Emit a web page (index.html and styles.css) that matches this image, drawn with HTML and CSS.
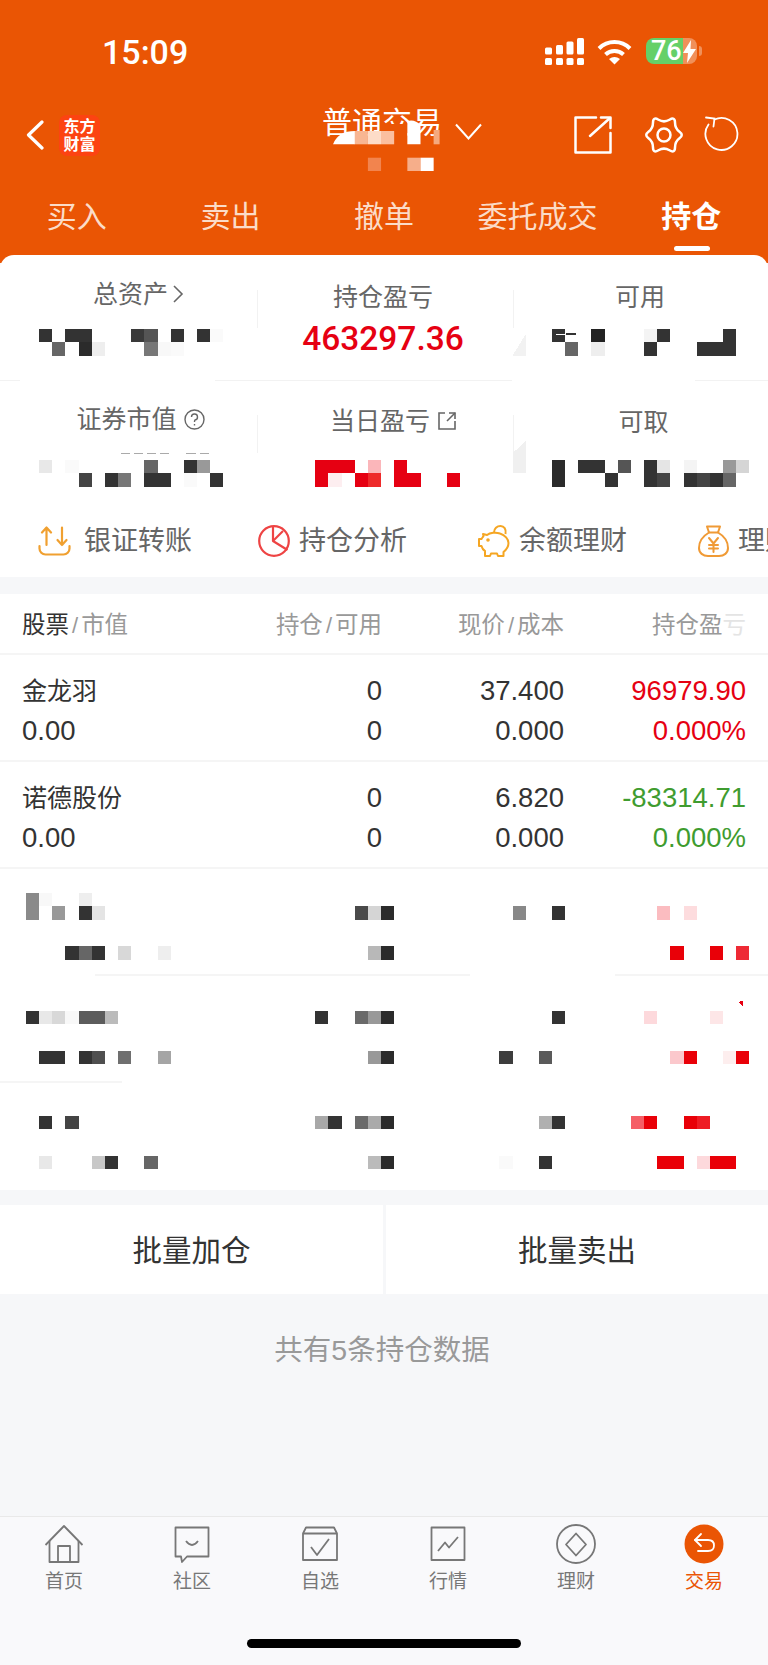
FILE: index.html
```html
<!DOCTYPE html>
<html>

<head>
  <meta charset="UTF-8">
  <title>持仓</title>
  <link rel="stylesheet" href="styles.css">
</head>

<body>
  <header class="top">
    <div class="status">
      <span class="status-time">15:09</span>
      <svg class="status-signal" width="40" height="27" viewBox="0 0 40 27" fill="#fff">
        <rect x="0" y="9.500" width="7" height="7" rx="1.500" />
        <rect x="11" y="7" width="7" height="9.500" rx="1.500" />
        <rect x="21.500" y="3.500" width="7" height="13" rx="1.500" />
        <rect x="32" y="0" width="7" height="16.500" rx="1.500" />
        <rect x="0" y="20" width="7" height="7" rx="1.500" />
        <rect x="11" y="20" width="7" height="7" rx="1.500" />
        <rect x="21.500" y="20" width="7" height="7" rx="1.500" />
        <rect x="32" y="20" width="7" height="7" rx="1.500" />
      </svg>
      <svg class="status-wifi" width="35" height="26" viewBox="0 0 35 26" fill="none" stroke="#fff" stroke-width="4">
        <path d="M2 9.500 A22 22 0 0 1 33 9.500" />
        <path d="M8.500 15.500 A13 13 0 0 1 26.500 15.500" />
        <path d="M17.500 25.500 L12 20 Q17.500 16 23 20 Z" fill="#fff" stroke="none" />
      </svg>
      <div class="battery">
        <span class="battery-num">76</span>
        <svg width="13" height="23" viewBox="0 0 13 23" fill="#fff">
          <path d="M8 0 L0 13 H5 L4 23 L13 9 H7.500 Z" />
        </svg>
      </div>
      <i class="battery-nub"></i>
    </div>

    <div class="nav">
      <svg class="nav-back" width="18" height="30" viewBox="0 0 18 30" fill="none" stroke="#fff" stroke-width="3.200" stroke-linecap="round" stroke-linejoin="round">
        <path d="M16 2 L2.500 15 L16 28" />
      </svg>
      <div class="logo">东方<br>财富</div>
      <div class="nav-title">普通交易</div>
      <svg class="nav-arrow" width="27" height="17" viewBox="0 0 27 17" fill="none" stroke="#fff" stroke-width="2">
        <path d="M1 1.500 L13.500 15.500 L26 1.500" />
      </svg>
      <div class="nav-tools">
        <svg width="38" height="38" viewBox="0 0 38 38" fill="none" stroke="#fff" stroke-width="2.500" stroke-linecap="round" stroke-linejoin="round">
          <path d="M22 1.500 H1.500 V36.500 H36.500 V17" />
          <path d="M16 20 L36 2" />
          <path d="M27 1.500 H36.500 V12" />
        </svg>
        <svg class="nav-gear" width="40" height="38" viewBox="0 0 40 38" fill="none" stroke="#fff" stroke-width="2.500">
          <path d="M35.500 22.250 Q40 19 35.500 15.750 Q31 12.500 31 6.500 Q31 .5 25.500 3.750 Q20 7 14.500 3.750 Q9 .5 9 6.500 Q9 12.500 4.500 15.750 Q0 19 4.500 22.250 Q9 25.500 9 31.500 Q9 37.500 14.500 34.250 Q20 31 25.500 34.250 Q31 37.500 31 31.500 Q31 25.500 35.500 22.250 Z" />
          <circle cx="20" cy="19" r="6.500" />
        </svg>
        <svg class="nav-reload" width="36" height="36" viewBox="0 0 36 36" fill="none" stroke="#fff" stroke-width="1.800" stroke-linecap="round">
          <path d="M11.500 3.500 A16 16 0 1 1 5.500 8.500" />
          <path d="M3 1.500 L11.500 2.500 L10.500 10.500" />
        </svg>
      </div>
      <!-- redaction over the account name -->
      <svg class="nav-mask" width="200" height="90" viewBox="0 0 200 90">
        <rect x="84" y="14" width="23.400" height="21" fill="#ea5504" />
        <path d="M33 34.300 Q38 21 55 21 V34.300 Z" fill="#fff" />
        <rect x="54.750" y="21" width="13.150" height="13.300" fill="#f8b692" />
        <rect x="67.900" y="21" width="13.150" height="13.300" fill="#fddcc8" />
        <rect x="81" y="21" width="13.150" height="13.300" fill="#fbbf9f" />
        <path d="M107.350 34.300 V11 Q115 9 120.500 15 V34.300 Z" fill="#fff" />
        <rect x="133.600" y="20" width="6" height="14.300" fill="#f5a97e" />
        <rect x="67.900" y="47.700" width="13.150" height="13.300" fill="#f2844e" />
        <rect x="107.350" y="47.700" width="13.150" height="13.300" fill="#f6ae8a" />
        <rect x="120.500" y="47.700" width="13.150" height="13.300" fill="#fff" />
      </svg>
    </div>

    <div class="tabs">
      <div class="tab">买入</div>
      <div class="tab">卖出</div>
      <div class="tab">撤单</div>
      <div class="tab">委托成交</div>
      <div class="tab tab-active">持仓</div>
    </div>
  </header>

  <section class="summary">
    <div class="stats">
      <div class="stat">
        <div class="stat-label stat-label-left">总资产
          <svg width="12" height="20" viewBox="0 0 12 20" fill="none" stroke="#666" stroke-width="1.600">
            <path d="M2 2 L10 10 L2 18" />
          </svg>
        </div>
      </div>
      <div class="stat stat-line">
        <div class="stat-label">持仓盈亏</div>
        <div class="stat-value">463297.36</div>
      </div>
      <div class="stat stat-line">
        <div class="stat-label">可用</div>
      </div>
      <svg class="mosaic mosaic-stats" viewBox="0 0 55 2" preserveAspectRatio="none" shape-rendering="crispEdges">
        <rect x="1" y="0" fill="#333" /><rect x="3" y="0" fill="#333" /><rect x="4" y="0" fill="#333" />
        <rect x="8" y="0" fill="#3a3a3a" /><rect x="9" y="0" fill="#555" /><rect x="11" y="0" fill="#333" />
        <rect x="13" y="0" fill="#333" /><rect x="14" y="0" fill="#fafafa" />
        <rect x="2" y="1" fill="#666" /><rect x="4" y="1" fill="#2b2b2b" /><rect x="5" y="1" fill="#eee" />
        <rect x="9" y="1" fill="#777" /><rect x="10" y="1" fill="#f8f8f8" /><rect x="11" y="1" fill="#fafafa" />
        <polygon points="37,2 38,2 38,.4" fill="#f2f2f2" />
        <rect x="40" y="0" fill="#333" /><rect class="cap" x="40.300" y=".35" fill="#fff" /><rect class="cap" x="41.100" y=".3" fill="#333" />
        <rect x="43" y="0" fill="#222" /><rect x="47" y="0" fill="#f4f4f4" /><rect x="48" y="0" fill="#333" /><rect x="53" y="0" fill="#333" />
        <rect x="41" y="1" fill="#666" /><rect x="43" y="1" fill="#eee" /><rect x="47" y="1" fill="#333" />
        <rect x="51" y="1" fill="#333" /><rect x="52" y="1" fill="#333" /><rect x="53" y="1" fill="#333" />
      </svg>
    </div>

    <div class="stats stats-second">
      <div class="stat">
        <div class="stat-label stat-label-left stat-label-wide">证券市值
          <svg class="stat-help" width="21" height="21" viewBox="0 0 21 21" fill="none" stroke="#666" stroke-width="1.400">
            <circle cx="10.500" cy="10.500" r="9.500" />
            <path d="M7.500 8 A3 3 0 1 1 11 11 Q10.500 11.500 10.500 13" />
            <path d="M10.500 15 V16.500" />
          </svg>
        </div>
      </div>
      <div class="stat stat-line">
        <div class="stat-label stat-label-mid">当日盈亏
          <svg class="stat-help" width="20" height="20" viewBox="0 0 20 20" fill="none" stroke="#666" stroke-width="1.600">
            <path d="M8 2 H2 V18 H18 V10" />
            <path d="M10 10 L18 2" />
            <path d="M12 2 H18 V8" />
          </svg>
        </div>
      </div>
      <div class="stat stat-line">
        <div class="stat-label stat-label-right">可取</div>
      </div>
      <svg class="mosaic mosaic-stats-low" viewBox="0 0 55 2" preserveAspectRatio="none" shape-rendering="crispEdges">
        <rect class="cap" x="7.200" y="-.55" fill="#aaa" /><rect class="cap" x="8.200" y="-.55" fill="#aaa" />
        <rect class="cap" x="9.200" y="-.55" fill="#aaa" /><rect class="cap" x="10.200" y="-.55" fill="#aaa" />
        <rect class="cap" x="12.200" y="-.55" fill="#aaa" /><rect class="cap" x="13.200" y="-.55" fill="#aaa" />
        <rect x="1" y="0" fill="#e8e8e8" /><rect x="3" y="0" fill="#fafafa" /><rect x="9" y="0" fill="#666" />
        <rect x="12" y="0" fill="#333" /><rect x="13" y="0" fill="#999" />
        <rect x="4" y="1" fill="#444" /><rect x="6" y="1" fill="#333" /><rect x="7" y="1" fill="#777" />
        <rect x="9" y="1" fill="#333" /><rect x="10" y="1" fill="#333" /><rect x="12" y="1" fill="#fafafa" /><rect x="14" y="1" fill="#333" />
        <rect x="22" y="0" fill="#e60012" /><rect x="23" y="0" fill="#e60012" /><rect x="24" y="0" fill="#e60012" />
        <rect x="26" y="0" fill="#fbb6ba" /><rect x="28" y="0" fill="#e60012" />
        <rect x="22" y="1" fill="#e60012" /><rect x="23" y="1" fill="#fdeef0" /><rect x="25" y="1" fill="#e60012" />
        <rect x="26" y="1" fill="#ee2a2a" /><rect x="28" y="1" fill="#e60012" /><rect x="29" y="1" fill="#e60012" /><rect x="32" y="1" fill="#e60012" />
        <polygon points="37,1 38,1 38,-1.450 37,-.5" fill="#f0f0f0" />
        <rect x="40" y="0" fill="#2b2b2b" /><rect x="42" y="0" fill="#333" /><rect x="43" y="0" fill="#333" /><rect x="45" y="0" fill="#555" />
        <rect x="47" y="0" fill="#333" /><rect x="48" y="0" fill="#e5e5e5" /><rect x="50" y="0" fill="#f4f4f4" />
        <rect x="53" y="0" fill="#999" /><rect x="54" y="0" fill="#d5d5d5" />
        <rect x="40" y="1" fill="#2b2b2b" /><rect x="44" y="1" fill="#333" /><rect x="47" y="1" fill="#333" /><rect x="48" y="1" fill="#444" />
        <rect x="50" y="1" fill="#333" /><rect x="51" y="1" fill="#444" /><rect x="52" y="1" fill="#333" /><rect x="53" y="1" fill="#666" />
      </svg>
    </div>

    <div class="shortcuts">
      <div class="shortcut shortcut-first">
        <svg width="33" height="30" viewBox="0 0 33 30" fill="none" stroke="#f0a030" stroke-width="2.200" stroke-linecap="round" stroke-linejoin="round">
          <path d="M8.500 19 V1.500 M4 6.500 L8.500 1.500 L13 6.500" />
          <path d="M24 1.500 V19 M19.500 14 L24 19 L28.500 14" />
          <path d="M1.500 20 V22.500 A6 6 0 0 0 7.500 28.500 H25.500 A6 6 0 0 0 31.500 22.500 V20" />
        </svg>
        <span>银证转账</span>
      </div>
      <div class="shortcut">
        <svg width="32" height="32" viewBox="0 0 32 32" fill="none" stroke="#ee4444" stroke-width="2.200" stroke-linejoin="round">
          <circle cx="16" cy="16" r="14.800" />
          <path d="M15 1.500 V16 L29.500 25" />
          <path d="M15 16 L25 6" />
        </svg>
        <span>持仓分析</span>
      </div>
      <div class="shortcut">
        <svg width="32" height="32" viewBox="0 0 32 32" fill="none" stroke="#f5a623" stroke-width="2" stroke-linejoin="round">
          <path d="M5 9 L9 10 C12 7.500 18 7 22 8.500 C27 10 30.500 14 30.500 18 C30.500 22 28 25 25.500 27 V31 H20 L19 28.500 H13 L12 31 H7 V26 C5 25 4 23 3.500 21 H1 V14 H3.500 C4 13 5 12 5.500 11 Z" />
          <path d="M16 7.500 C16 3.500 19 1 22.500 1 C26 1 28.500 4 27.500 9" />
          <circle cx="10" cy="15" r=".8" fill="#f5a623" />
        </svg>
        <span>余额理财</span>
      </div>
      <div class="shortcut">
        <svg width="31" height="32" viewBox="0 0 31 32" fill="none" stroke="#f09a35" stroke-width="2" stroke-linejoin="round" stroke-linecap="round">
          <path d="M9 1.500 H22 L20 7.500 H11 Z" />
          <path d="M11 7.500 C5 11 1 17 1 23 C1 28 5 31 10 31 H21 C26 31 30 28 30 23 C30 17 26 11 20 7.500" />
          <path d="M11 13 L15.500 18.500 L20 13 M15.500 18.500 V27 M11 20 H20 M11 23.500 H20" />
        </svg>
        <span>理财产品</span>
      </div>
    </div>
  </section>

  <section class="holdings">
    <div class="row row-head">
      <div class="cell-name"><b>股票</b><span class="sep">/</span>市值</div>
      <div>持仓<span class="sep">/</span>可用</div>
      <div>现价<span class="sep">/</span>成本</div>
      <div>持仓盈<span class="fade">亏</span></div>
    </div>

    <div class="row">
      <div class="cell-name"><p class="name">金龙羽</p><p>0.00</p></div>
      <div><p>0</p><p>0</p></div>
      <div><p>37.400</p><p>0.000</p></div>
      <div class="up"><p>96979.90</p><p>0.000%</p></div>
    </div>
    <div class="row">
      <div class="cell-name"><p class="name">诺德股份</p><p>0.00</p></div>
      <div><p>0</p><p>0</p></div>
      <div><p>6.820</p><p>0.000</p></div>
      <div class="down"><p>-83314.71</p><p>0.000%</p></div>
    </div>

    <div class="blur-row blur-a">
      <svg class="mosaic mosaic-five" viewBox="0 0 55 5" preserveAspectRatio="none" shape-rendering="crispEdges">
        <rect x="0" y="0" fill="#8a8a8a" /><rect x="1" y="0" fill="#f8f8f8" /><rect x="4" y="0" fill="#eee" />
        <rect x="0" y="1" fill="#8a8a8a" /><rect x="2" y="1" fill="#999" /><rect x="4" y="1" fill="#333" /><rect x="5" y="1" fill="#e4e4e4" />
        <rect x="25" y="1" fill="#4a4a4a" /><rect x="26" y="1" fill="#d5d5d5" /><rect x="27" y="1" fill="#2b2b2b" />
        <rect x="37" y="1" fill="#888" /><rect x="40" y="1" fill="#333" /><rect x="48" y="1" fill="#fbbcc0" /><rect x="50" y="1" fill="#fddcde" />
        <rect x="3" y="4" fill="#333" /><rect x="4" y="4" fill="#666" /><rect x="5" y="4" fill="#333" /><rect x="7" y="4" fill="#d8d8d8" /><rect x="10" y="4" fill="#eee" />
        <rect x="26" y="4" fill="#b8b8b8" /><rect x="27" y="4" fill="#2b2b2b" />
        <rect x="49" y="4" fill="#e90008" /><rect x="52" y="4" fill="#e90008" /><rect x="54" y="4" fill="#ee2a35" />
      </svg>
    </div>
    <div class="blur-row blur-b">
      <svg class="mosaic mosaic-four" viewBox="0 0 55 4" preserveAspectRatio="none" shape-rendering="crispEdges">
        <polygon points="54.150,-.7 54.550,-.75 54.550,-.3" fill="#e60012" />
        <rect x="0" y="0" fill="#333" /><rect x="1" y="0" fill="#e8e8e8" /><rect x="2" y="0" fill="#d8d8d8" /><rect x="3" y="0" fill="#f8f8f8" />
        <rect x="4" y="0" fill="#5c5c5c" /><rect x="5" y="0" fill="#5c5c5c" /><rect x="6" y="0" fill="#bbb" />
        <rect x="22" y="0" fill="#333" /><rect x="25" y="0" fill="#6a6a6a" /><rect x="26" y="0" fill="#999" /><rect x="27" y="0" fill="#2b2b2b" />
        <rect x="40" y="0" fill="#333" /><rect x="47" y="0" fill="#fdd9dc" /><rect x="52" y="0" fill="#fde6e7" />
        <rect x="1" y="3" fill="#333" /><rect x="2" y="3" fill="#333" /><rect x="4" y="3" fill="#333" /><rect x="5" y="3" fill="#4f4f4f" />
        <rect x="7" y="3" fill="#6f6f6f" /><rect x="10" y="3" fill="#a5a5a5" /><rect x="26" y="3" fill="#999" /><rect x="27" y="3" fill="#2b2b2b" />
        <rect x="36" y="3" fill="#3d3d3d" /><rect x="39" y="3" fill="#5a5a5a" />
        <rect x="49" y="3" fill="#fbc8cc" /><rect x="50" y="3" fill="#e90008" /><rect x="53" y="3" fill="#fdeeee" /><rect x="54" y="3" fill="#e90008" />
      </svg>
    </div>
    <div class="blur-row blur-c">
      <svg class="mosaic mosaic-four" viewBox="0 0 55 4" preserveAspectRatio="none" shape-rendering="crispEdges">
        <rect x="1" y="0" fill="#333" /><rect x="3" y="0" fill="#444" /><rect x="22" y="0" fill="#a8a8a8" /><rect x="23" y="0" fill="#333" />
        <rect x="25" y="0" fill="#6a6a6a" /><rect x="26" y="0" fill="#aaa" /><rect x="27" y="0" fill="#2b2b2b" />
        <rect x="39" y="0" fill="#b0b0b0" /><rect x="40" y="0" fill="#333" />
        <rect x="46" y="0" fill="#f55e66" /><rect x="47" y="0" fill="#e90008" /><rect x="50" y="0" fill="#e90008" /><rect x="51" y="0" fill="#ee1c24" />
        <rect x="1" y="3" fill="#e8e8e8" /><rect x="5" y="3" fill="#c8c8c8" /><rect x="6" y="3" fill="#333" /><rect x="9" y="3" fill="#666" />
        <rect x="26" y="3" fill="#bbb" /><rect x="27" y="3" fill="#2b2b2b" /><rect x="36" y="3" fill="#fafafa" /><rect x="39" y="3" fill="#333" />
        <rect x="48" y="3" fill="#e90008" /><rect x="49" y="3" fill="#e90008" /><rect x="51" y="3" fill="#fdd9dc" /><rect x="52" y="3" fill="#e90008" /><rect x="53" y="3" fill="#e90008" />
      </svg>
    </div>
  </section>

  <div class="actions">
    <div class="action">批量加仓</div>
    <div class="action">批量卖出</div>
  </div>

  <div class="count">共有5条持仓数据</div>

  <footer class="tabbar">
    <div class="tabbar-items">
      <div class="tabbar-item">
        <svg width="40" height="40" viewBox="0 0 40 40" fill="none" stroke="#777" stroke-width="1.800" stroke-linejoin="round">
          <path d="M1.500 21 L20 2 L38.500 21" />
          <path d="M5.500 17 V38 H34.500 V17" />
          <path d="M14 38 V22 H26 V38" />
        </svg>
        <span>首页</span>
      </div>
      <div class="tabbar-item">
        <svg width="40" height="40" viewBox="0 0 40 40" fill="none" stroke="#777" stroke-width="1.800" stroke-linejoin="round">
          <path d="M3.500 3.500 H36.500 V32.500 H15 L10 38 L9 32.500 H3.500 Z" />
          <path d="M14 17 Q20 25 26 17" />
        </svg>
        <span>社区</span>
      </div>
      <div class="tabbar-item">
        <svg width="40" height="40" viewBox="0 0 40 40" fill="none" stroke="#777" stroke-width="1.800" stroke-linejoin="round">
          <path d="M6 3.500 H34 L37 9.500 V36 H3 V9.500 Z" />
          <path d="M3 9.500 H37" />
          <path d="M11 23 L17 31 L29 15" />
        </svg>
        <span>自选</span>
      </div>
      <div class="tabbar-item">
        <svg width="40" height="40" viewBox="0 0 40 40" fill="none" stroke="#777" stroke-width="1.800" stroke-linejoin="round">
          <rect x="3.500" y="3.500" width="33" height="32.500" />
          <path d="M10 27 L17 18.500 L21 23.500 L30 13" />
        </svg>
        <span>行情</span>
      </div>
      <div class="tabbar-item">
        <svg width="40" height="40" viewBox="0 0 40 40" fill="none" stroke="#777" stroke-width="1.800" stroke-linejoin="round">
          <circle cx="20" cy="20" r="19" />
          <path d="M20 9.500 L30 20.500 L20 31.500 L10 20.500 Z" />
        </svg>
        <span>理财</span>
      </div>
      <div class="tabbar-item tabbar-active">
        <svg width="40" height="40" viewBox="0 0 40 40" fill="none" stroke="#fff" stroke-width="1.800" stroke-linecap="round" stroke-linejoin="round">
          <circle cx="20" cy="20" r="19.500" fill="#ea5504" stroke="none" />
          <path d="M17 10 L11 16 L17 22" />
          <path d="M11 16 H24 Q30 16 30 21.500 Q30 27 24 27 H14" />
        </svg>
        <span>交易</span>
      </div>
    </div>
    <i class="home-bar"></i>
  </footer>
</body>

</html>
```

FILE: styles.css
```css
* {
  box-sizing: border-box;
}

body {
  margin: 0;
  width: 768px;
  height: 1665px;
  overflow: hidden;
  background-color: #f6f7f9;
  color: #333;
  font-family: "Liberation Sans", "Noto Sans CJK SC", sans-serif;
}

p {
  margin: 0;
}

svg {
  display: block;
  flex-shrink: 0;
}

/* orange header */
.top {
  height: 263px;
  background-color: #ea5504;
  color: #fff;
}

.status {
  height: 90px;
  padding: 38px 0 0 102px;
  display: flex;
  align-items: flex-start;
}

.status-time {
  font-family: Roboto, sans-serif;
  font-weight: 500;
  font-size: 34px;
  line-height: 28px;
  width: 443px;
}

.status-wifi {
  margin: 1px 0 0 12px;
}

.status-signal {
  margin-top: 0;
}

.battery {
  width: 51px;
  height: 26px;
  margin-left: 14px;
  padding-left: 5px;
  display: flex;
  align-items: center;
  gap: 0;
  border-radius: 8px;
  background: linear-gradient(90deg, #65d068 0, #65d068 37px, #f0905a 37px);
}

.battery-num {
  width: 32px;
  font-family: Roboto, sans-serif;
  font-weight: 500;
  font-size: 27px;
  line-height: 26px;
}

.battery-nub {
  width: 3px;
  height: 10px;
  margin: 8px 0 0 2px;
  border-radius: 0 3px 3px 0;
  background-color: #f0905a;
}

.nav {
  position: relative;
  height: 90px;
  padding: 0 29px 0 26px;
  display: flex;
  align-items: center;
}

.logo {
  flex-shrink: 0;
  width: 41px;
  height: 41px;
  margin-left: 15px;
  padding-top: 3px;
  border-radius: 8px;
  background-color: #fc4312;
  font-size: 16px;
  line-height: 18px;
  font-weight: bold;
  text-align: center;
}

.nav-title {
  align-self: flex-start;
  margin: 18px 0 0 222px;
  font-size: 30px;
  line-height: 30px;
  white-space: nowrap;
}

.nav-arrow {
  margin: -8px 0 0 13px;
}

.nav-tools {
  margin-left: auto;
  display: flex;
  align-items: flex-start;
}

.nav-gear {
  margin-left: 32px;
}

.nav-reload {
  margin-left: 19px;
}

.nav-mask {
  position: absolute;
  left: 300px;
  top: 20px;
}

.tabs {
  height: 83px;
  display: grid;
  grid-template-columns: repeat(5, 1fr);
}

.tab {
  position: relative;
  height: 75px;
  padding-top: 17px;
  text-align: center;
  font-size: 30px;
  line-height: 40px;
  color: #fbdcc8;
}

.tab-active {
  color: #fff;
  font-weight: bold;
}

.tab-active::after {
  content: "";
  position: absolute;
  left: 60px;
  top: 66px;
  width: 36px;
  height: 5px;
  border-radius: 3px;
  background-color: #fff;
}

/* account summary */
.summary {
  margin-top: -8px;
  position: relative;
  height: 322px;
  border-radius: 14px 14px 0 0;
  background-color: #fff;
}

.stats {
  position: relative;
  height: 126px;
  padding-top: 25px;
  display: grid;
  grid-template-columns: 257px 252px 259px;
  background: linear-gradient(90deg, #f2f2f2 20px, #fff 20px, #fff 215px, #f2f2f2 215px, #f2f2f2 512px, #fff 512px, #fff 695px, #f2f2f2 695px) left bottom / 100% 1px no-repeat;
}

.stats-second {
  height: 124px;
  padding-top: 24px;
  background: none;
}

.stat {
  position: relative;
  text-align: center;
}

.stat-line::before {
  content: "";
  position: absolute;
  left: 0;
  top: 10px;
  width: 1px;
  height: 38px;
  background-color: #f2f2f2;
}

.stat-line + .stat-line {
  padding-left: 3px;
}

.stat-line + .stat-line::before {
  left: 4px;
}

.stat-label {
  height: 34px;
  display: flex;
  align-items: center;
  justify-content: center;
  gap: 4px;
  font-size: 25px;
  line-height: 34px;
  color: #666;
}

.stat-label-left {
  margin-left: 20px;
  margin-top: -3px;
}

.stat-label-wide {
  margin-left: 24px;
}

.stat-label-mid {
  margin-left: 21px;
  margin-top: -1px;
}

.stat-label-right {
  margin-left: 7px;
}

.stat-help {
  margin-left: 3px;
}

.stat-value {
  font-family: Roboto, sans-serif;
  font-weight: 500;
  font-size: 33.500px;
  line-height: 49px;
  color: #e60012;
}

.mosaic {
  width: 723.250px;
  overflow: visible;
}

.mosaic rect {
  width: 1px;
  height: 1px;
}

.mosaic .cap {
  width: .7px;
  height: .12px;
}

.mosaic-stats,
.mosaic-stats-low {
  position: absolute;
  left: 26px;
  height: 26.600px;
}

.mosaic-stats {
  top: 73.500px;
}

.mosaic-stats-low {
  top: 78.500px;
}

.mosaic-five {
  height: 66.500px;
}

.mosaic-four {
  height: 53.200px;
}

.shortcuts {
  height: 72px;
  padding-left: 38px;
  display: flex;
  align-items: center;
  gap: 66px;
  overflow: hidden;
  white-space: nowrap;
}

.shortcut {
  display: flex;
  align-items: center;
  gap: 9px;
  font-size: 27px;
  line-height: 34px;
  color: #666;
}

.shortcut + .shortcut + .shortcut {
  margin-left: 5px;
}

.shortcut-first {
  gap: 13px;
}

/* holdings table */
.holdings {
  margin-top: 17px;
  background-color: #fff;
}

.row {
  height: 107px;
  padding: 16px 22px 0;
  display: grid;
  grid-template-columns: 180px 180px 182px 182px;
  border-bottom: 2px solid #f5f5f5;
  font-size: 27.500px;
  line-height: 40px;
  text-align: right;
}

.row-head {
  height: 61px;
  padding-top: 11px;
  font-size: 23.500px;
  color: #999;
}

.row-head b {
  font-weight: normal;
  color: #333;
}

.row-head .sep {
  margin: 0 3px;
  font-size: 22px;
}

.row-head .fade {
  color: #e4e4e4;
}

.cell-name {
  text-align: left;
  white-space: nowrap;
}

.name {
  font-size: 25px;
}

.up {
  color: #e60012;
}

.down {
  color: #3f9c2f;
}

.blur-row {
  height: 107px;
  padding-left: 26px;
  background-position: left bottom;
  background-size: 100% 2px;
  background-repeat: no-repeat;
}

.blur-a {
  padding-top: 24px;
  background-image: linear-gradient(90deg, #fff 95px, #f5f5f5 95px, #f5f5f5 470px, #fff 470px, #fff 615px, #f5f5f5 615px);
}

.blur-b {
  padding-top: 35px;
  background-image: linear-gradient(90deg, #f5f5f5 122px, #fff 122px);
}

.blur-c {
  padding-top: 33px;
}

/* bulk buttons */
.actions {
  margin-top: 15px;
  height: 89px;
  display: grid;
  grid-template-columns: 383px 382px;
  column-gap: 3px;
}

.action {
  padding-top: 3px;
  background-color: #fff;
  text-align: center;
  font-size: 29.500px;
  line-height: 86px;
}

.count {
  height: 222px;
  padding: 35px 4px 0 0;
  text-align: center;
  font-size: 28.500px;
  line-height: 42px;
  color: #999;
}

/* bottom tab bar */
.tabbar {
  height: 149px;
  border-top: 1px solid #e9e9e9;
  background-color: #f9f9fb;
}

.tabbar-items {
  padding-top: 7px;
  display: grid;
  grid-template-columns: repeat(6, 1fr);
}

.tabbar-item {
  display: flex;
  flex-direction: column;
  align-items: center;
  font-size: 19px;
  line-height: 30px;
  color: #777;
}

.tabbar-item span {
  margin-top: 3px;
}

.tabbar-active {
  color: #ea5504;
}

.home-bar {
  display: block;
  width: 274px;
  height: 9px;
  margin: 42px auto 0;
  border-radius: 5px;
  background-color: #000;
}
```
